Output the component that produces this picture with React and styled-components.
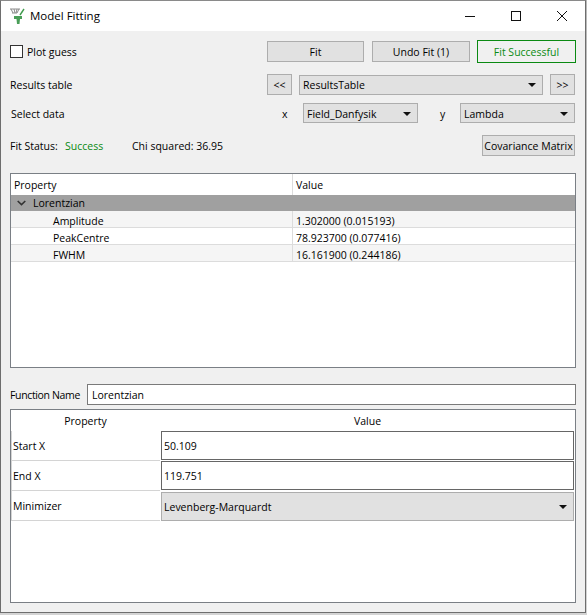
import React from 'react';
import styled, { createGlobalStyle } from 'styled-components';

const GlobalStyle = createGlobalStyle`
  html, body {
    margin: 0;
    padding: 0;
    background: #c9c9c9;
  }
  body {
    font-family: "Open Sans", "Liberation Sans", sans-serif;
    font-size: 10.5px;
    color: #000;
  }
  * { box-sizing: border-box; }
`;

const Page = styled.div`
  width: 587px;
  height: 615px;
  overflow: hidden;
  background: linear-gradient(#b9b9b9, #d4d4d4);
`;

const Window = styled.div`
  width: 586px;
  height: 613px;
  border: 1px solid #6e6e6e;
  border-top-color: #8a8a8a;
  background: #f0f0f0;
  display: flex;
  flex-direction: column;
`;

const TitleBar = styled.div`
  height: 30px;
  flex: none;
  background: #fff;
  display: flex;
  align-items: center;
  padding-left: 8px;
`;

const TitleText = styled.span`
  font-size: 11.5px;
  margin: -2px 0 0 3px;
`;

const WindowButtons = styled.div`
  margin-left: auto;
  display: flex;
  height: 100%;
`;

const WindowButton = styled.div`
  width: 46px;
  display: flex;
  align-items: center;
  justify-content: center;
  color: #111;
`;

const Content = styled.div`
  flex: 1;
  display: flex;
  flex-direction: column;
  padding: 9px;
`;

const Row = styled.div`
  display: flex;
  align-items: center;
  height: ${p => p.$height}px;
  margin-top: ${p => p.$top || 0}px;
  margin-bottom: ${p => p.$gap || 0}px;
`;

const Label = styled.span`
  width: ${p => p.$width ? p.$width + 'px' : 'auto'};
  flex: none;
  white-space: nowrap;
  margin-left: ${p => p.$left || 0}px;
  padding-top: ${p => p.$drop ? 2 : 0}px;
  letter-spacing: ${p => p.$tight ? '-0.35px' : 'normal'};
  color: ${p => p.$color || '#000'};
`;

const CheckBox = styled.span`
  width: 13px;
  height: 13px;
  flex: none;
  background: #fff;
  border: 1px solid #333;
  margin-right: 4px;
`;

const Button = styled.div`
  flex: none;
  height: 21px;
  width: ${p => p.$width}px;
  margin-left: ${p => p.$left || 0}px;
  padding-top: ${p => p.$drop ? 2 : 0}px;
  background: #e1e1e1;
  border: 1px solid #adadad;
  display: flex;
  align-items: center;
  justify-content: center;
  white-space: nowrap;
`;

const SuccessButton = styled(Button)`
  height: 23px;
  background: #f0f0f0;
  border-color: #0a8a12;
  color: #0a8a12;
`;

const Combo = styled.div`
  flex: none;
  height: 20px;
  width: ${p => p.$width}px;
  margin-left: ${p => p.$left || 0}px;
  background: #e1e1e1;
  border: 1px solid #adadad;
  display: flex;
  align-items: center;
  justify-content: space-between;
  padding: ${p => p.$drop ? 2 : 0}px 6px 0 3px;
`;

const Arrow = styled.span`
  width: 0;
  height: 0;
  border-left: 4px solid transparent;
  border-right: 4px solid transparent;
  border-top: 4px solid #111;
`;

const TableBox = styled.div`
  flex: none;
  height: ${p => p.$height}px;
  background: #fff;
  border: 1px solid #7a7f85;
  display: flex;
  flex-direction: column;
`;

const ResultGrid = styled.div`
  display: grid;
  grid-template-columns: 282px 1fr;
  height: ${p => p.$height}px;
  align-items: center;
  background: ${p => p.$shade ? '#f5f5f5' : '#fff'};
  border-bottom: ${p => p.$line ? '1px solid #dcdcdc' : 'none'};
`;

const Cell = styled.div`
  height: 100%;
  display: flex;
  align-items: center;
  padding-left: ${p => p.$indent || 3}px;
  padding-top: ${p => p.$drop ? 3 : 0}px;
  border-right: ${p => p.$line ? '1px solid #dcdcdc' : 'none'};
  white-space: nowrap;
`;

const GroupRow = styled.div`
  height: 16px;
  background: #a0a0a0;
  display: flex;
  align-items: center;
  padding-left: 6px;
  gap: 7px;
`;

const FunctionInput = styled.div`
  flex: 1;
  height: 21px;
  background: #fff;
  border: 1px solid #7a7a7a;
  display: flex;
  align-items: center;
  padding-left: 4px;
  margin-left: 6px;
`;

const PropGrid = styled.div`
  display: grid;
  grid-template-columns: 149px 1fr;
  height: ${p => p.$height}px;
`;

const HeadCell = styled.div`
  display: flex;
  align-items: center;
  justify-content: center;
`;

const NameCell = styled.div`
  display: flex;
  align-items: center;
  padding-left: 1px;
  border-left: 1px solid #d4d4d4;
  border-bottom: 1px solid #d4d4d4;
`;

const TextField = styled.div`
  margin: 0 1px 1px 1px;
  background: #fff;
  border: 1px solid #666;
  display: flex;
  align-items: center;
  padding-left: 2px;
`;

const ComboField = styled.div`
  margin: 1px 1px 0 1px;
  background: #e1e1e1;
  border: 1px solid #adadad;
  display: flex;
  align-items: center;
  justify-content: space-between;
  padding: 0 6px 0 2px;
`;

const results = [
  { name: 'Amplitude', value: '1.302000 (0.015193)', shade: true },
  { name: 'PeakCentre', value: '78.923700 (0.077416)' },
  { name: 'FWHM', value: '16.161900 (0.244186)', shade: true },
];

const AppIcon = () => (
  <svg width="18" height="18" viewBox="0 0 18 18">
    <path d="M1 2h10M2 2l2 4M5 2l1 4M8 2l-1 4M10 2l-2 4M3 6h5" stroke="#8c8c8c" strokeWidth="1" fill="none" />
    <path d="M15 2l-4 6" stroke="#3f9a4c" strokeWidth="1.4" fill="none" />
    <path d="M5 9h8v3h-2l-.5 5h-2.5l-.5-5H5z" fill="#4a9e58" />
  </svg>
);

const MinIcon = () => (
  <svg width="10" height="10" viewBox="0 0 10 10"><path d="M0 5.5h10" stroke="#111" strokeWidth="1" /></svg>
);

const MaxIcon = () => (
  <svg width="10" height="10" viewBox="0 0 10 10"><rect x=".5" y=".5" width="9" height="9" fill="none" stroke="#111" strokeWidth="1" /></svg>
);

const CloseIcon = () => (
  <svg width="10" height="10" viewBox="0 0 10 10"><path d="M0 0l10 10M10 0L0 10" stroke="#111" strokeWidth="1" /></svg>
);

const Chevron = () => (
  <svg width="9" height="6" viewBox="0 0 9 6"><path d="M.7 1l3.8 3.6L8.3 1" fill="none" stroke="#333" strokeWidth="1.6" /></svg>
);

export default function App() {
  return (
    <Page>
      <GlobalStyle />
      <Window>
        <TitleBar>
          <AppIcon />
          <TitleText>Model Fitting</TitleText>
          <WindowButtons>
            <WindowButton><MinIcon /></WindowButton>
            <WindowButton><MaxIcon /></WindowButton>
            <WindowButton><CloseIcon /></WindowButton>
          </WindowButtons>
        </TitleBar>
        <Content>
          <Row $height={23} $gap={11}>
            <CheckBox />
            <Label $width={240}>Plot guess</Label>
            <Button $width={97}>Fit</Button>
            <Button $width={98} $left={8}>Undo Fit (1)</Button>
            <SuccessButton $width={99} $left={7}>Fit Successful</SuccessButton>
          </Row>
          <Row $height={21} $gap={8}>
            <Label $width={257}>Results table</Label>
            <Button $width={25}>&lt;&lt;</Button>
            <Combo $width={244} $left={7}>ResultsTable<Arrow /></Combo>
            <Button $width={25} $left={7}>&gt;&gt;</Button>
          </Row>
          <Row $height={20} $gap={11}>
            <Label $width={271} $left={1} $drop>Select data</Label>
            <Label $width={21} $drop>x</Label>
            <Combo $width={115} $drop>Field_Danfysik<Arrow /></Combo>
            <Label $width={20} $left={22} $drop>y</Label>
            <Combo $width={115} $drop>Lambda<Arrow /></Combo>
          </Row>
          <Row $height={22} $gap={17}>
            <Label $width={55} $drop>Fit Status:</Label>
            <Label $width={67} $color="#0a8a12" $drop>Success</Label>
            <Label $width={350} $drop>Chi squared: 36.95</Label>
            <Button $width={93} $drop>Covariance Matrix</Button>
          </Row>
          <TableBox $height={195}>
            <ResultGrid $height={21}>
              <Cell $line>Property</Cell>
              <Cell>Value</Cell>
            </ResultGrid>
            <GroupRow><Chevron />Lorentzian</GroupRow>
            {results.map(r => (
              <ResultGrid key={r.name} $height={17} $shade={r.shade} $line>
                <Cell $indent={42} $line $drop>{r.name}</Cell>
                <Cell $drop>{r.value}</Cell>
              </ResultGrid>
            ))}
          </TableBox>
          <Row $height={21} $gap={4} $top={16}>
            <Label $width={71} $tight>Function Name</Label>
            <FunctionInput>Lorentzian</FunctionInput>
          </Row>
          <TableBox $height={194}>
            <PropGrid $height={21}>
              <HeadCell>Property</HeadCell>
              <HeadCell>Value</HeadCell>
            </PropGrid>
            <PropGrid $height={30}>
              <NameCell>Start X</NameCell>
              <TextField>50.109</TextField>
            </PropGrid>
            <PropGrid $height={30}>
              <NameCell>End X</NameCell>
              <TextField>119.751</TextField>
            </PropGrid>
            <PropGrid $height={30}>
              <NameCell>Minimizer</NameCell>
              <ComboField>Levenberg-Marquardt<Arrow /></ComboField>
            </PropGrid>
          </TableBox>
        </Content>
      </Window>
    </Page>
  );
}
